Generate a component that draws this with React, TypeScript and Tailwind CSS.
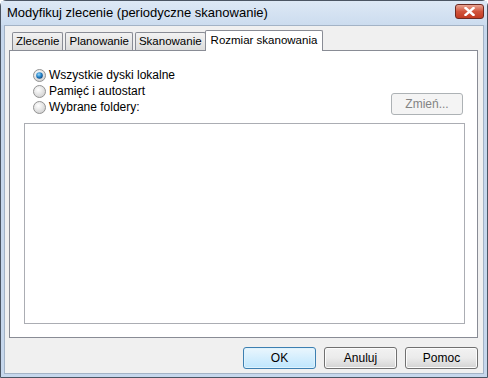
import React from "react";

const font = { fontFamily: '"Liberation Sans", Arial, sans-serif' };

function Radio({ checked, label, id }: { checked?: boolean; label: string; id: string }) {
  return (
    <div className="flex h-4 items-center gap-[3px]">
      <svg width="13" height="13" viewBox="0 0 13 13" className="shrink-0">
        <defs>
          <radialGradient id={`rb${id}`} cx="40%" cy="35%" r="70%">
            <stop offset="0%" stopColor="#ffffff" />
            <stop offset="100%" stopColor="#cfcfcf" />
          </radialGradient>
          <radialGradient id={`dot${id}`} cx="40%" cy="35%" r="70%">
            <stop offset="0%" stopColor="#9bd6f7" />
            <stop offset="55%" stopColor="#2283c9" />
            <stop offset="100%" stopColor="#0c3f78" />
          </radialGradient>
        </defs>
        <circle cx="6.5" cy="6.5" r="6" fill={`url(#rb${id})`} stroke="#939393" strokeWidth="1" />
        {checked && <circle cx="6.5" cy="6.5" r="3.3" fill={`url(#dot${id})`} />}
      </svg>
      <span className="text-[12px] leading-none text-black">{label}</span>
    </div>
  );
}

function Tab({ label, active }: { label: string; active?: boolean }) {
  if (active)
    return (
      <div className="relative z-10 -mb-px -ml-[3px] flex h-[21px] items-center rounded-t-[2px] border border-b-0 border-[#898c95] bg-white px-[5px] text-[11.5px] text-black">
        {label}
      </div>
    );
  return (
    <div className="flex h-[18px] items-center rounded-t-[2px] border border-b-0 border-[#898c95] bg-gradient-to-b from-[#f2f2f2] to-[#dcdcdc] px-[3px] text-[11.5px] text-black">
      {label}
    </div>
  );
}

function Btn({ label, primary, disabled }: { label: string; primary?: boolean; disabled?: boolean }) {
  return (
    <div
      className={`flex h-[22px] items-center justify-center rounded-[3px] border text-[12px] ${
        disabled
          ? "w-[72px] border-[#adb2b5] bg-[#f4f4f4] text-[#838383]"
          : primary
          ? "w-[73px] border-[#3c7fb1] bg-gradient-to-b from-[#eaf6fd] to-[#bee6fd] text-black shadow-[inset_0_0_0_1px_#dff2fc]"
          : "w-[73px] border-[#707070] bg-gradient-to-b from-[#f2f2f2] via-[#ebebeb] to-[#d3d3d3] text-black shadow-[inset_0_0_0_1px_#fcfcfc]"
      }`}
    >
      {label}
    </div>
  );
}

export default function App() {
  return (
    <div style={font} className="h-[378px] w-[488px] overflow-hidden bg-white">
      <div className="flex h-[378px] w-[488px] flex-col rounded-t-[6px] border border-[#4b5563] bg-[#c6d7ec]">
        {/* Title bar */}
        <div className="flex h-[24px] shrink-0 items-center justify-between bg-gradient-to-b from-[#dde8f5] to-[#ccdcef] pl-[6px] pr-[3px]">
          <span className="text-[13px] text-black">Modyfikuj zlecenie (periodyczne skanowanie)</span>
          <div className="mt-[-3px] flex h-[15px] w-[29px] items-center justify-center rounded-[3px] border border-[#6e2a22] bg-gradient-to-b from-[#e8a493] via-[#d1543c] to-[#c23b22]">
            <svg width="11" height="9" viewBox="0 0 11 9">
              <path d="M1.5 1 L9.5 8 M9.5 1 L1.5 8" stroke="#ffffff" strokeWidth="2.4" strokeLinecap="square" />
            </svg>
          </div>
        </div>

        {/* Body */}
        <div className="mx-[3px] mb-[3px] flex flex-1 flex-col border border-[#a3b3c6] bg-[#f0f0f0] px-[4px] pt-[4px]">
          {/* Tabs */}
          <div className="flex items-end gap-[2px] pl-[3px]">
            <Tab label="Zlecenie" />
            <Tab label="Planowanie" />
            <Tab label="Skanowanie" />
            <Tab label="Rozmiar skanowania" active />
          </div>

          {/* Panel */}
          <div className="flex h-[288px] w-[469px] flex-col border border-[#898c95] bg-white pb-[13px] pl-[14px] pr-[12px] pt-[16px]">
            <div className="flex items-end justify-between pl-[9px] pr-[2px]">
              <div className="flex flex-col">
                <Radio id="a" checked label="Wszystkie dyski lokalne" />
                <Radio id="b" label="Pamięć i autostart" />
                <Radio id="c" label="Wybrane foldery:" />
              </div>
              <Btn label="Zmień..." disabled />
            </div>
            <div className="mt-[8px] flex-1 border border-[#abadb3]" />
          </div>

          {/* Buttons */}
          <div className="mt-[9px] flex justify-end gap-[8px] pr-[1px]">
            <Btn label="OK" primary />
            <Btn label="Anuluj" />
            <Btn label="Pomoc" />
          </div>
        </div>
      </div>
    </div>
  );
}
